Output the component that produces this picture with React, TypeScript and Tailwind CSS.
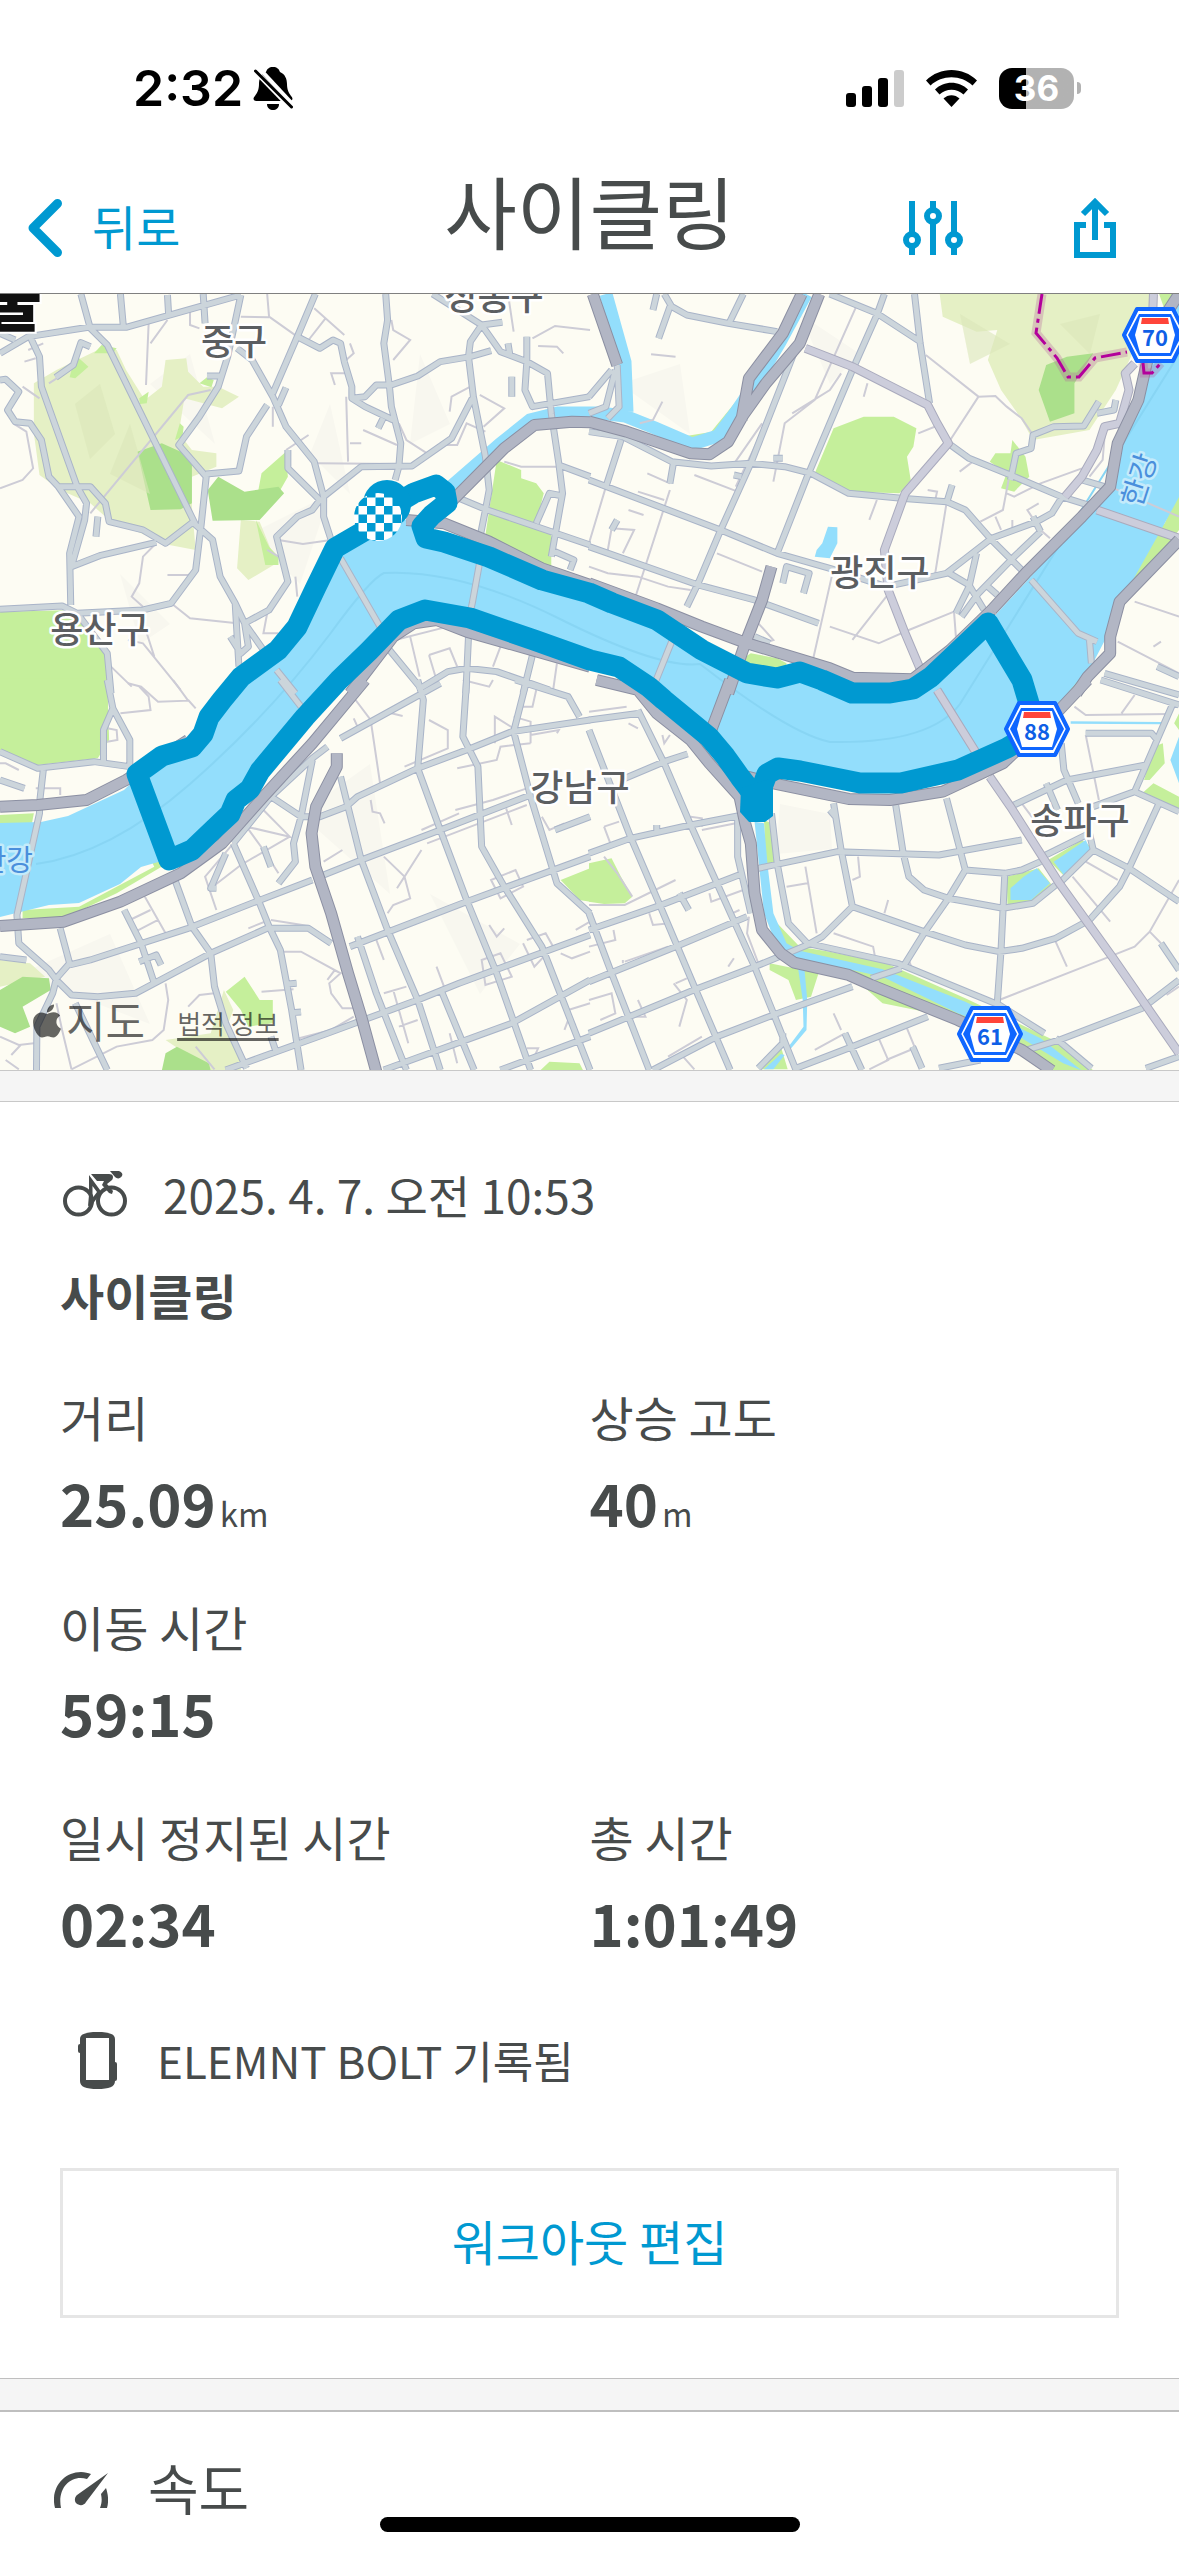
import type { ReactNode } from 'react';
import { FaApple } from 'react-icons/fa';

type Layers = {
  light: string;
  park: string;
  forest: string;
  water: string;
  minor: string;
  main: string;
  arterial: string;
  highway: string;
};

type Tile = Layers & { id: string; transform: string };

// Vector tiles, each drawn in its own 1568-unit wide grid
const TILES: Tile[] = [
  {
    id: 'nw',
    transform: 'translate(0 -4) scale(0.3763 0.3333)',
    light:
      'M90 280L150 240L260 180L310 180L335 240L385 330L430 290L440 210L495 205L500 245L540 290L580 290L635 320L590 355L490 325L475 430L510 480L575 490L575 530L510 560L510 650L520 780L450 765L290 690L240 640L160 600L105 555L90 430Z M640 690L690 695L735 820L660 870L630 835Z',
    park:
      'M685 610L695 550L760 485L765 560L740 610Z M190 240L210 205L235 230L200 265L185 262Z M680 690L715 770L740 800L740 825L705 825Z M250 190L270 165L310 175L300 190Z M370 325L395 305L390 340L372 342Z M530 280L550 262L568 270L562 292Z M465 450L478 400L488 410L485 440Z M0 965L210 960L215 1000L285 1100L285 1210L0 1210Z M1320 510L1385 540L1385 565L1425 580L1445 610L1425 700L1465 735L1465 830L1440 830L1290 735Z',
    forest: 'M365 485L430 460L510 500L510 640L480 658L400 660Z M552 600L580 560L650 605L740 590L755 610L690 690L565 692Z',
    water: '',
    minor:
      'M395 100L388 285M445 90L400 160M560 300L500 315L240 670M710 12L715 80L790 140M640 80L715 82M0 595L60 570L88 535L70 425L35 400M845 520L1060 522M920 320L925 515M965 420L1055 465M1060 400L1080 450L1135 490M415 760L380 800L370 880L350 920L380 950M740 750L805 762L880 750M455 940L505 985L630 1000M785 860L790 920M835 55L915 135M865 85L820 150M1040 90L1045 120L1090 150L1045 210M1415 145L1475 108L1568 120M1430 168L1480 170L1497 190M1340 515L1385 530L1480 530M1195 365L1200 320L1250 290M1275 315L1340 355L1285 410M1350 12L1365 125M1290 425L1240 400L1215 465L1180 465M710 970L700 1030L740 1030M1050 1050L1190 1010M1090 1040L1115 1160M1140 1095L1195 1075L1215 1130M1140 1095L1160 1170M130 280L185 240M60 290L105 325M725 350L725 410M820 435L760 480M930 460L960 460M890 285L880 250L920 250M505 60L505 105L530 115M65 215L95 205M75 180L115 160M340 1050L380 1060L480 1200M390 1030L410 1100M295 1130L350 1190M1480 1120L1470 1200M1330 1070L1310 1130M445 855L500 855L520 840M710 780L740 800M930 160L940 190L920 210',
    main:
      'M0 190L75 140L235 112L335 112L640 15M320 12L328 112M215 12L240 115L285 165L520 705L565 750L585 860L625 940L650 1000L700 1080M80 140L105 200L110 290L205 590M240 170L215 158L195 225L148 262M0 270L15 268L50 305L20 360L40 395L80 400L110 450L130 560L155 590L240 590L280 640L290 695L380 720L440 760L520 690M155 590L210 680L185 790L188 945M205 590L230 640L225 690L190 830L265 797L415 757M0 958L165 948L205 970L380 960L455 940L520 840L535 700L548 560L475 465L530 380L580 290L605 200L640 15M548 552L635 543L655 440L710 345M445 15L448 72M540 12L545 100M630 175L670 210L725 320L760 410L835 515L860 620L860 680L880 750M838 12L790 140L725 310M760 293L740 345M790 140L850 175L885 150L905 160L915 215L935 290L935 325L970 350L1045 390M935 325L970 320L1000 285L1040 285L1110 258L1170 215L1250 200L1305 182M1025 12L1030 90L1020 160L1035 290L1040 350L1065 460L1060 530L1050 570M860 620L960 530L1095 528L1200 445L1255 325M1150 12L1280 105L1250 155L1245 200L1258 320L1290 500L1300 600L1290 660L1275 745M1280 105L1330 185L1400 215L1455 250L1465 370L1485 520L1495 610L1465 800M1280 105L1335 97M1350 160L1355 195M1400 215L1395 300L1415 350L1568 320M1485 525L1568 560M1220 625L1290 658L1568 765M765 480L765 535L850 630L830 660L790 680L735 740L765 875L715 960L650 1000M1425 700L1460 610L1495 618M1465 780L1525 810L1515 840M625 940L635 1130M612 1040L640 1090L660 1070L650 1000M205 970L285 1090L295 1210M1035 1080L1115 1190M1110 1200L1190 1145L1240 1135L1320 1145L1460 1200M1245 1040L1238 1210M1415 1095L1390 1210M1018 385L1005 415M1400 140L1400 215M1360 260L1360 320M905 805L1010 1010M1275 815L1255 940L1245 990M735 1140L785 1210M0 130L40 150M260 680L255 740M550 258L590 258',
    arterial: '',
    highway:
      'M1195 640L1340 475L1420 405L1520 395L1568 397M1080 690L1180 700L1300 755L1440 835L1568 885M930 1210L1045 1040L1100 1000L1160 990L1240 1025L1568 1130',
  },
  {
    id: 'ne',
    transform: 'translate(589 -4) scale(0.3763 0.3333)',
    light:
      'M932 12L1500 12L1440 200L1400 300L1330 420L1180 450L1145 380L1095 300L1060 210L1085 120L1030 125L940 80Z',
    park:
      'M600 550L650 415L730 380L810 380L870 415L862 470L845 500L855 570L825 610L690 605Z M1065 515L1080 490L1120 490L1125 450L1160 500L1170 560L1130 605L1095 595L1110 550Z M1515 12L1568 12L1530 60Z M1568 600L1530 700L1490 740L1420 900L1440 905L1568 720Z M1340 1110L1270 1210L1310 1210Z M410 1105L430 1090L500 1105L525 1120L520 1145L440 1140Z',
    forest: 'M1195 300L1215 225L1270 200L1340 190L1290 280L1290 370L1225 395Z',
    water: 'M600 800L605 780L620 760L635 710L660 712L660 760L640 805Z',
    minor:
      'M165 193L230 200M710 50L600 330L520 400L490 575M670 250L640 300L540 370M895 195L1035 320L1080 318L1110 350L1150 385L1180 435M950 640L920 850M765 630L745 690M280 555L395 605M155 550L215 580M215 600L125 915M45 590L0 760M340 790L460 845M0 830L50 850L130 860L210 890L270 900M60 715L120 720L90 790M60 715L50 780M645 860L595 1110M790 920L700 1050M640 1010L770 1060L850 1020L970 965M970 965L975 1040M875 430L930 405M1310 535L1200 580L1130 620L1110 610M1115 570L1100 660L1040 695M1195 640L1165 660L1200 720L1225 745M1450 935L1568 980M1405 1055L1568 1150M1395 595L1568 680M470 400L390 590M460 400L380 530M195 335L170 390L135 400M1035 320L960 450M105 660L145 675M130 605L200 630M900 600L925 605L920 630M1370 440L1365 510L1330 560M1080 680L1095 720M740 280L730 320M450 1000L490 1050L440 1070M1500 1070L1520 1055M1020 515L985 545M1125 690L1125 720',
    main:
      'M640 12L765 70L880 155M865 12L880 160L905 340M785 12L765 75L700 240L580 560L500 790M600 30L430 520L350 720L290 880L260 950M0 425L90 440L220 515L325 528L430 520L520 530L590 550L690 610L830 625L950 635L1000 660L1070 750L1150 840M0 570L350 720L500 790L640 835L790 890L950 850L1070 745L1190 695L1230 670L1255 625M0 770L290 885L440 930L610 1000M85 450L45 590M225 515L215 580M200 12L220 50L260 75L370 100L500 125M410 12L370 105M170 60L180 12M215 50L185 145M955 460L1010 505L1120 555L1255 620L1340 650M1120 570L1135 490L1175 475L1180 435L1235 410L1315 408L1355 335M1350 370L1395 360L1400 330M965 585L950 640M950 845L1010 885L1050 960M1030 790L1010 890L975 970M1200 725L1130 800L1035 910L990 980M1180 680L1200 725M1060 890L1085 915M515 880L525 830L585 850L570 910M1510 1130L1568 1160M1370 1150L1568 1215M1175 870L1300 1030L1350 1055M1330 1050L1335 1120M225 1040L175 1180M75 225L80 350L50 385M70 240L45 350L0 370M60 240L0 320M385 555L405 560M440 1040L480 1060M1310 570L1370 590M490 505L515 505M60 720L75 690',
    arterial:
      'M575 175L700 230L900 345L925 400L955 460L840 610L785 780L795 900L840 1030L885 1150M1500 12L1498 70M1450 220L1425 250L1435 300L1410 400L1370 410L1350 480L1310 560L1265 620M1350 660L1568 745',
    highway:
      'M10 12L75 225M565 12L515 130L425 265L405 390M612 12L560 160L470 280L410 375L370 455L320 493L270 490L100 425L0 395M1568 12L1500 130L1460 330L1405 460L1385 590L1310 680L1160 850L1070 960M1568 750L1410 935L1385 1040L1385 1090L1325 1160L1295 1210M0 880L180 955L300 1010L420 1060L640 1135L700 1163L860 1168L960 1080L1070 960M485 830L460 930L415 1060L370 1210',
  },
  {
    id: 'sw',
    transform: 'translate(0 386) scale(0.3763 0.3333)',
    light: 'M0 840L80 850L120 890L0 920Z M440 1080L560 1060L595 930L620 990L600 1050L640 1150L640 1172L560 1172Z',
    park:
      'M0 -5L285 -5L290 180L260 235L100 255L0 210Z M60 690L210 680L410 560L380 490L440 490L460 540L310 640L170 715L60 715Z M0 405L90 400L85 430L0 430Z M600 935L650 890L690 960L725 960L725 1030L660 1040L640 990Z M1490 600L1568 565L1568 665L1540 660Z M1435 1172L1460 1145L1540 1150L1550 1172Z',
    forest: 'M0 930L60 890L130 895L135 930L60 980L80 1040L40 1060L0 1040Z M430 1172L440 1120L470 1100L555 1150L560 1172Z',
    water: '',
    minor:
      'M340 10L375 20L420 65L500 62L460 0M320 100L400 90L395 50L370 20M500 60L520 85M0 250L15 250L50 270M285 145L310 150L312 180L285 185M95 325L160 325L160 345M700 390L770 470L655 440M655 440L700 510L740 580M770 470L640 555L560 625M620 490L545 590L575 690M385 650L440 760M345 720L400 690M360 755L420 720M750 815L800 815L905 880L875 910L880 940L910 985L940 985M440 910L447 960L435 1050L405 1080L310 1100L190 1168M150 970L165 1050L190 1168M695 935L780 928M795 1075L880 1050L940 1010M945 60L985 120L1010 310M1140 120L1190 150L1190 205L1075 260M1120 510L1075 590L1090 655L1045 675L1030 700M1020 530L1075 590L1055 625M1210 390L1310 360L1400 325M1120 450L1220 400M1135 490L1400 375M1365 145L1315 110L1315 190M1365 110L1410 125L1410 190M1305 600L1370 570L1390 620L1330 655ZM1280 840L1330 820L1360 890L1290 915ZM1400 780L1450 760L1470 800L1420 860L1390 790M1300 735L1320 770L1340 745M1020 940L1080 920M1060 1040L1110 1020M1045 930L1085 1090M0 1070L50 1095L90 1090M15 1140L50 1168M55 1095L30 1125M520 1100L570 1168M500 980L530 945L570 940M720 720L820 738M985 360L990 395L1010 400L1022 430M1215 265L1320 240L1330 200L1410 190M1440 410L1460 450L1500 430M1160 860L1180 920M1000 780L1020 840M1040 100L1070 108M940 115L950 140M860 545L910 510M1480 160L1485 150L1410 165M1500 1050L1510 1020L1530 1035M1490 820L1520 835L1568 815M1530 750L1568 725M1345 385L1360 435M1230 0L1300 20L1310 0M660 745L715 720M870 900L890 870M1390 80L1415 80L1425 30M1510 990L1568 970M1195 1060L1215 1150M1400 1105L1430 1105L1420 1130',
    main:
      'M115 270L105 370L105 400L45 705L50 790L130 870L150 900L190 945L260 950L360 940L560 820L710 745L820 745L880 790M0 215L100 265L250 245L345 260M285 0L300 85L345 180L345 260M300 85L275 150L275 245M0 300L65 325M0 830L70 840M160 745L185 850L150 895M185 855L240 840L500 745L680 665L830 600M150 895L140 940L98 1040L97 1170M200 970L285 1170M330 690L375 790L410 910M370 845L415 825L428 855M465 600L510 740L560 820L570 920L600 1030L655 1165M620 490L690 670L715 740L745 810L775 990L800 1170M600 1170L870 1060L1110 960L1220 910L1568 765M860 585L960 540L1170 450L1410 345M620 490L720 350L830 235L870 200M720 350L800 410L780 490L785 545L740 610M830 240L800 410L850 410L920 380L950 350L1110 265L1240 210L1360 155L1568 120M905 290L960 540L1030 750L1110 960L1170 1170M930 800L1240 665L1568 530M1110 0L1125 60L1110 265L1170 450L1240 660L1320 880L1410 1170M1240 0L1230 170L1270 260L1280 500L1340 620L1440 800L1568 1170M1400 0L1365 155L1410 350L1480 610L1568 700M1370 0L1510 50L1540 110M905 175L1170 10M950 770L1000 940L1080 1170M1020 1170L1360 1030L1568 900M1330 1170L1568 1070M1170 925L1260 1170M1475 450L1568 410M745 0L800 80M720 1070L735 1120M765 912L788 910M775 998L800 996M600 520L560 625L575 625M700 500L720 560',
    arterial: '',
    highway:
      'M0 380L100 375L230 360L335 300L500 180M0 738L170 725L320 665L480 580L590 490L700 350L830 190L970 0M895 220L895 260L840 380L828 460L838 560L880 700L925 880L960 1010L1000 1175',
  },
  {
    id: 'se',
    transform: 'translate(589 386) scale(0.3763 0.3333)',
    light: '',
    park:
      'M0 550L60 535L85 590L115 650L95 670L40 672L0 665Z M465 420L485 430L492 550L470 550Z M480 850L610 880L590 950L550 960L530 900L480 870Z M500 730L560 800L640 815L790 850L1000 955L1290 1110L1340 1172L1230 1172L1000 1020L780 970L700 890L520 830Z M1110 590L1195 565L1230 615L1170 670L1112 675Z M1220 540L1310 480L1335 500L1260 585Z M1500 200L1525 190L1530 250L1490 300L1475 300Z M1470 340L1500 310L1568 350L1568 390Z M460 1168L510 1100L528 1168Z M1568 100L1555 130L1568 150Z M1240 70L1300 0L1290 -10L1230 50Z',
    forest: '',
    water:
      'M1235 545L1320 480L1335 515L1265 590Z M1120 625L1155 590L1190 565L1225 610L1175 660L1120 660Z M1568 170L1545 240L1568 310Z M1280 124L1520 126L1520 133L1280 131Z M440 425L465 430L475 560L490 700L525 790L560 812L780 868L1000 965L1200 1075L1310 1172L1260 1150L1150 1075L980 1000L780 890L540 830L500 800L465 700Z M555 860L572 860L580 960L578 1050L535 1108L530 1100L570 1040L568 960Z M465 1168L510 1122L520 1125L490 1168Z',
    minor:
      'M0 95L100 80M300 450L390 430M575 560L605 760M525 620L580 610M715 530L720 590L700 600M650 760L755 800L760 830M795 660L785 700M1090 960L1350 845L1450 800L1490 755L1568 600M1240 785L1270 860M1320 165L1355 360M1290 80L1320 105L1540 102M1450 45L1415 100M1285 590L1385 725M1320 545L1405 600M0 675L95 675L230 600M40 530L75 580L115 650M160 700L170 735L215 730M95 845L210 800M225 910L260 960L240 1040M230 910L260 895M770 1075L795 1140L745 1168M790 1140L865 1105M845 1045L865 1100M600 1110L680 1060M650 1000L670 1050M425 710L420 760L450 850M40 440L60 500L100 480M40 440L80 425M0 960L60 940L70 1000L30 1020M210 1130L300 1070M320 640L325 665L410 630M1490 755L1520 790M1150 370L1190 430M105 130L130 145M195 165L200 190L215 165M370 860L385 835M90 840L90 850M0 800L70 780L65 750M270 410L300 415L300 440M850 840L858 865M1535 945L1568 920M250 1130L280 1168M380 700L400 690M130 960L150 1010L120 1010',
    main:
      'M0 520L110 475L270 435L395 408M0 750L180 680L410 580M0 905L230 800L420 710M0 1060L290 925L430 865L580 795M170 1170L340 1070L490 1005L700 920M0 120L135 100M130 90L200 250L270 435L340 610L440 860L490 1000L550 1170M85 300L200 245L262 222M0 150L110 470L190 680L280 920L375 1170M0 700L60 880L160 1170M395 410L395 530L430 700M485 400L500 550L530 730L580 790L820 850L1090 975L1210 1060M450 565L660 515L930 525L1150 480M650 370L670 510L700 680L620 770L580 795M815 375L835 520L850 590L890 630L955 655L1100 685L1180 670L1240 615M950 355L1000 570L955 655L890 760L835 860M700 680L890 755L1000 795L1090 815L1150 805L1240 775L1330 720M1000 570L1105 580L1150 570L1200 545M1105 580L1095 810L1085 970M1205 530L1330 460L1340 510L1250 610M1340 510L1435 565L1568 665M1120 380L1270 300L1480 255M1255 190L1262 270L1300 370M1215 310L1245 390M1320 160L1495 160L1510 180M1360 0L1568 75M1550 75L1450 335L1568 395M1515 370L1435 565L1410 620L1330 720M1450 335L1340 380M550 1165L700 1100L900 1010M1165 1110L1250 1080L1470 985L1568 900M1240 1075L1335 1165M680 1060L725 1170M930 1165L1040 1140M750 895L830 865M860 1100L885 1165M1480 1165L1568 1130M450 1165L515 1090L515 1060M1520 790L1568 870M240 640L265 690M640 390L655 410M180 435L180 460',
    arterial: 'M925 30L1030 220M1065 290L1120 380L1250 610L1390 830L1470 960L1568 1120',
    highway:
      'M20 0L130 30L180 100L270 180L320 250L400 350L415 430L430 490L440 640L460 750L510 820L545 848L690 885L750 915L980 1020L1150 1110L1230 1172M375 0L325 150M420 290L490 310L690 357L800 360L940 335L1100 250L1250 90L1325 0',
  },
];

const RIVER =
  'M0 529L41 528L68 522L124 496L162 459L192 453L209 423L241 383L278 356L297 333L316 293L335 254L378 229L414 225L444 248L489 263L542 286L589 299L657 326L702 356L747 379L777 386L800 376L852 399L890 399L931 383L988 329L1025 289L1078 229L1108 199L1116 156L1135 106L1153 39L1179 6V203L1161 236L1120 309L1105 346L1093 369L1056 413L1003 446L958 476L901 489L860 489L773 476L756 500L740 483L709 443L664 406L619 373L590 366L534 346L470 324L425 316L399 326L369 363L339 386L260 479L230 523L192 556L165 566L141 573L120 590L79 609L49 611L0 623Z';

// Tributary running down from the north-east
const STREAM =
  'M446 197L500 150L530 126L558 119L600 119L625 122L655 134L692 150L718 142L736 118L755 90L780 48L806 0M606 0L625 68L627 118';

const ROUTE =
  'M378 229L335 254L316 293L297 333L278 356L241 383L222 406L209 423L203 440L192 453L162 462L137 480L169 566L192 556L214 535L230 520L236 506L250 495L260 477L305 423L339 386L369 357L399 326L425 316L470 324L534 346L590 366L619 373L649 393L664 406L709 443L725 462L740 483L750 496L756 516L761 496L767 480L778 474L800 477L860 489L901 489L958 476L1007 454L1037 436L1022 386L988 329L931 383L913 395L890 399L852 399L822 386L800 378L777 384L747 379L702 356L657 326L612 309L589 299L542 286L489 263L444 248L426 244L422 232L432 221L447 209L445 198L436 191L414 199L387 215';

const ROAD_STYLES = [
  { layer: 'main', casing: '#a9b4c8', fill: '#ccd5db', outer: 7, inner: 5 },
  { layer: 'arterial', casing: '#a9aabd', fill: '#cccddb', outer: 9, inner: 7 },
  { layer: 'highway', casing: '#8b8fa2', fill: '#b2b6c4', outer: 12, inner: 10 },
] as const;

const DISTRICTS = [
  { name: '중구', x: 234, y: 61 },
  { name: '성동구', x: 494, y: 16 },
  { name: '용산구', x: 100, y: 349 },
  { name: '광진구', x: 880, y: 292 },
  { name: '강남구', x: 580, y: 507 },
  { name: '송파구', x: 1080, y: 540 },
];

const SHIELDS = [
  { no: '70', x: 1155, y: 41 },
  { no: '88', x: 1037, y: 435 },
  { no: '61', x: 990, y: 740 },
];

const STATS = [
  { label: '거리', value: '25.09', unit: 'km', span: false },
  { label: '상승 고도', value: '40', unit: 'm', span: false },
  { label: '이동 시간', value: '59:15', unit: '', span: true },
  { label: '일시 정지된 시간', value: '02:34', unit: '', span: false },
  { label: '총 시간', value: '1:01:49', unit: '', span: false },
];

function TileGroup({ layer, children }: { layer: keyof Layers; children: (d: string) => ReactNode }) {
  return (
    <>
      {TILES.filter((t) => t[layer]).map((t) => (
        <g key={t.id} transform={t.transform}>
          {children(t[layer])}
        </g>
      ))}
    </>
  );
}

function Shield({ no, x, y }: { no: string; x: number; y: number }) {
  return (
    <g transform={`translate(${x} ${y})`}>
      <path d="M-18 -26H18L31 0L18 26H-18L-31 0Z" fill="#fff" stroke="#0f66ff" strokeWidth="4" strokeLinejoin="round" />
      <path d="M-16 -21H16L27 0L16 21H-16L-27 0Z" fill="#0f66ff" />
      <path d="M-15 -18H15L20 0L15 18H-15L-20 0Z" fill="#fff" />
      <path d="M-13 -17H13L14 -11H-14Z" fill="#ff453a" />
      <text y="11" textAnchor="middle" className="fill-[#0f5fe6] font-['Noto_Sans_CJK_KR',sans-serif] text-[22px] font-bold">
        {no}
      </text>
    </g>
  );
}

function RouteMap() {
  return (
    <svg viewBox="0 0 1179 776" className="block w-full bg-[#fdfcf3]" role="img" aria-label="경로 지도">
      <defs>
        <pattern id="checker" x="367" y="212" width="17" height="17" patternUnits="userSpaceOnUse">
          <rect width="17" height="17" fill="#fff" />
          <rect width="8.5" height="8.5" fill="#0099d1" />
          <rect x="8.5" y="8.5" width="8.5" height="8.5" fill="#0099d1" />
        </pattern>
      </defs>

      {/* Hill shading */}
      <path
        d="M150 90L190 60L215 150ZM250 240L330 200L300 290ZM120 280L170 330L140 350ZM330 110L350 200L310 160ZM420 60L450 130L410 150ZM620 90L680 70L690 140ZM800 20L860 60L830 90ZM300 520L370 470L390 600ZM20 680L110 640L150 730ZM430 600L520 650L480 700ZM780 510L830 520L832 555L776 560Z"
        fill="#f8f7ef"
      />

      <TileGroup layer="light">{(d) => <path d={d} fill="#e5f0c5" />}</TileGroup>
      <TileGroup layer="park">{(d) => <path d={d} fill="#c5ef9b" />}</TileGroup>
      <TileGroup layer="forest">{(d) => <path d={d} fill="#abe08b" />}</TileGroup>
      <path d="M75 110L100 90L115 140L90 165ZM130 130L150 200L110 180ZM960 20L1010 50L970 70ZM1060 30L1100 20L1090 60Z" fill="#dbe6b9" opacity="0.6" />
      <path d="M649 132L686 142L711 138L742 100L742 112L716 138L692 148Z" fill="#c5ef9b" />

      <path d={RIVER} fill="#93defc" />
      <path d={STREAM} fill="none" stroke="#93defc" strokeWidth="13" />
      <TileGroup layer="water">{(d) => <path d={d} fill="#93defc" />}</TileGroup>
      <path
        d="M36 570Q110 560 190 490T330 340Q370 285 384 279Q460 275 560 325T700 370Q790 440 830 448Q930 450 960 410L1179 60"
        fill="none"
        stroke="#88d5f4"
        strokeWidth="2"
      />

      <TileGroup layer="minor">
        {(d) => <path d={d} fill="none" stroke="#cdccd6" strokeWidth="2" vectorEffect="non-scaling-stroke" />}
      </TileGroup>
      {ROAD_STYLES.map((r) => (
        <g key={r.layer} fill="none" strokeLinejoin="round">
          <TileGroup layer={r.layer}>
            {(d) => <path d={d} stroke={r.casing} strokeWidth={r.outer} vectorEffect="non-scaling-stroke" />}
          </TileGroup>
          <TileGroup layer={r.layer}>
            {(d) => <path d={d} stroke={r.fill} strokeWidth={r.inner} vectorEffect="non-scaling-stroke" />}
          </TileGroup>
        </g>
      ))}

      {/* City limits */}
      <g fill="none">
        <path d="M1042 0L1036 39L1057 64L1068 83L1079 83L1095 64L1127 58M1143 69L1144 79L1152 79L1161 69" stroke="#b4609c" strokeOpacity="0.3" strokeWidth="9" />
        <path
          d="M1042 0L1036 39L1057 64L1068 83L1079 83L1095 64L1127 58M1143 69L1144 79L1152 79L1161 69"
          stroke="#b3009b"
          strokeWidth="3"
          strokeDasharray="20 5 4 5"
        />
      </g>

      <path d={ROUTE} fill="none" stroke="#0099d1" strokeWidth="21" strokeLinejoin="round" strokeLinecap="round" />
      <path d="M741 494L773 484V522L765 528H749L740 518Z" fill="#0099d1" />
      <circle cx="387" cy="210" r="24" fill="#0099d1" />
      <circle cx="378" cy="223" r="24" fill="url(#checker)" />

      <g className="font-['Noto_Sans_CJK_KR',sans-serif]">
        {DISTRICTS.map((d) => (
          <text
            key={d.name}
            x={d.x}
            y={d.y}
            textAnchor="middle"
            stroke="#fff"
            strokeWidth="5"
            strokeLinejoin="round"
            paintOrder="stroke"
            className="fill-[#5b5e61] text-[36px] font-medium"
          >
            {d.name}
          </text>
        ))}
        <text x="42" y="31" textAnchor="end" stroke="#fff" strokeWidth="4" paintOrder="stroke" className="fill-[#111] text-[64px] font-black">
          서울
        </text>
        <g className="fill-[#4a8fdc] text-[29px]" stroke="#c4ebfb" strokeWidth="5" strokeLinejoin="round" paintOrder="stroke">
          <text x="33" y="577" textAnchor="end">
            한강
          </text>
          <text textAnchor="middle" transform="translate(1149 189) rotate(-72)">
            한강
          </text>
        </g>
      </g>

      {SHIELDS.map((s) => (
        <Shield key={s.no} {...s} />
      ))}
    </svg>
  );
}

function StatusBar() {
  return (
    <div className="flex h-[162px] items-center justify-between pt-[14px] pr-[98px] pl-[133px] font-['Inter',sans-serif] text-black">
      <div className="flex items-center gap-[10px]">
        <span className="text-[50px] leading-[60px] font-semibold">2:32</span>
        <svg viewBox="0 0 40 43" className="h-[43px] w-[40px]">
          <path d="M20 0c-4 0-6 2-7 5C8 7 6 12 6 17c0 6-2 9-4 12-3 3-1 5 2 5h32c3 0 5-2 2-5-2-3-4-6-4-12 0-5-2-10-7-12-1-3-3-5-7-5Z" />
          <path d="M14 37h12c0 4-3 6-6 6s-6-2-6-6Z" />
          <path d="M5 0L43 41" stroke="#fff" strokeWidth="4" />
          <path d="M2 4L38 41" stroke="#fff" strokeWidth="5" />
          <path d="M2.500 4L38.500 40" stroke="#000" strokeWidth="3" strokeLinecap="round" />
        </svg>
      </div>
      <div className="flex items-center gap-[22px]">
        <svg viewBox="0 0 58 37" className="h-[37px] w-[58px]">
          <rect y="23" width="10" height="14" rx="3" />
          <rect x="16" y="16" width="10" height="21" rx="3" />
          <rect x="32" y="8" width="10" height="29" rx="3" />
          <rect x="48" width="10" height="37" rx="3" fill="#ccc" />
        </svg>
        <svg viewBox="0 0 51 37" className="h-[37px] w-[51px]">
          <path d="M0 10.500C14-3.500 37-3.500 51 10.500L46.500 15.500C35 4.500 16 4.500 4.500 15.500Z" />
          <path d="M9 19.500C18 10.500 33 10.500 42 19.500L37.500 24.500C31 18 20 18 13.500 24.500Z" />
          <path d="M17.500 28.500C22 24 29 24 33.500 28.500L25.500 37Z" />
        </svg>
        <div className="flex items-center gap-[3px]">
          <div className="flex h-[41px] w-[75px] items-center justify-center rounded-[13px] bg-linear-to-r from-black from-36% to-[#b2b2b2] to-36% text-[35px] leading-none font-bold text-white">
            36
          </div>
          <div className="h-3 w-1 rounded-r-full bg-[#b2b2b2]" />
        </div>
      </div>
    </div>
  );
}

function NavBar() {
  return (
    <nav className="grid h-[132px] grid-cols-[1fr_auto_1fr] items-center border-b border-[#808080] px-7">
      <button className="flex items-center gap-[30px] justify-self-start text-[48px] leading-[60px] text-[#0099d1]">
        <svg viewBox="0 0 34 58" className="h-[58px] w-[34px]" fill="none" stroke="currentColor" strokeWidth="9" strokeLinecap="round" strokeLinejoin="round">
          <path d="M29.500 4.500L5 29L29.500 53.500" />
        </svg>
        <span className="pb-1.5">뒤로</span>
      </button>
      <h1 className="pb-9 text-[79px] leading-[96px]">사이클링</h1>
      <div className="flex items-center gap-[111px] justify-self-end pr-[35px] text-[#0099d1]">
        <button aria-label="설정">
          <svg viewBox="0 0 60 54" className="h-[54px] w-[60px]" fill="none" stroke="currentColor" strokeWidth="6">
            <path d="M9 0V32M9 46V54M30 0V8M30 22V54M51 0V32M51 46V54" />
            <circle cx="9" cy="39" r="6" />
            <circle cx="30" cy="15" r="6" />
            <circle cx="51" cy="39" r="6" />
          </svg>
        </button>
        <button aria-label="공유">
          <svg viewBox="0 0 42 60" className="h-[60px] w-[42px]" fill="none" stroke="currentColor" strokeWidth="6">
            <path d="M12 27H3V57H39V27H30M21 42V5M9 16L21 4L33 16" />
          </svg>
        </button>
      </div>
    </nav>
  );
}

function BikeIcon() {
  return (
    <svg viewBox="0 0 64 46" className="h-[46px] w-[64px]" fill="currentColor">
      <g fill="none" stroke="currentColor" strokeWidth="4">
        <circle cx="15.500" cy="30" r="13.500" />
        <circle cx="48.500" cy="30" r="13.500" />
      </g>
      <path d="M47 0H56C59 1 60 3 59 5C57 8 54 8 52 6Z" />
      <path d="M28 3H46C50 3 51 6 49 9L44 13L50 20L49 23L46 22L39 14L41 10L34 10Z" />
      <path fillRule="evenodd" d="M26 4L37 19C38 20 38 22 37 23L29 34L25 35L26 24ZM29.500 15V27L34 21Z" />
    </svg>
  );
}

function DeviceIcon() {
  return (
    <svg viewBox="0 0 39 57" className="h-[57px] w-[39px]" fill="currentColor">
      <path fillRule="evenodd" d="M2 7C2 2 8 0 19.500 0S37 2 37 7V49C37 55 31 57 19.500 57S2 55 2 49ZM8 6V48H31V6Z" />
      <rect y="12" width="4" height="9" rx="2" />
      <rect x="35" y="30" width="4" height="19" rx="2" />
    </svg>
  );
}

function GaugeIcon() {
  return (
    <svg viewBox="0 0 54 36" className="mt-2 h-[36px] w-[54px]" fill="currentColor">
      <path d="M1 36C-4 17 9 0 27 0C31 0 34 1 37 2L33 7C17 2 3 16 7 36Z" />
      <path d="M54 1L32 30C30 34 25 34 22 31C20 28 21 25 23 23Z" />
      <path d="M52 16C54 22 55 29 53 36H46C48 31 48 27 47 22Z" />
    </svg>
  );
}

export default function App() {
  return (
    <div className="relative min-h-screen bg-white font-['Noto_Sans_CJK_KR',sans-serif] text-[#474b4b]">
      <header>
        <StatusBar />
        <NavBar />
      </header>

      <main>
        <div className="relative">
          <RouteMap />
          <div className="absolute bottom-[21px] left-8 flex items-center gap-8 text-black/60">
            <div className="flex items-center gap-1 text-[43px] leading-[60px]">
              <FaApple className="mt-1 h-[38px] w-[30px]" />
              지도
            </div>
            <a href="#legal" className="mt-2 text-[26px] leading-[36px] underline decoration-3 underline-offset-4">
              법적 정보
            </a>
          </div>
        </div>

        <div className="h-8 border-y border-[#c8c8c8] bg-[#f5f5f5]" />

        <section className="px-[60px] py-[60px]">
          <div className="flex items-center gap-9 pt-[2px] pl-[3px] text-[46px] leading-[60px]">
            <BikeIcon />
            2025. 4. 7. 오전 10:53
          </div>
          <h2 className="mt-10 text-[48px] leading-[60px] font-bold">사이클링</h2>

          <dl className="mt-[62px] grid grid-cols-2 gap-y-[60px]">
            {STATS.map((s) => (
              <div key={s.label} className={s.span ? 'col-span-2' : ''}>
                <dt className="text-[48px] leading-[60px]">{s.label}</dt>
                <dd className="mt-5 h-[70px] text-[58px] leading-[72px] font-bold">
                  {s.value}
                  {s.unit && <span className="ml-1 text-[33px] leading-none font-normal">{s.unit}</span>}
                </dd>
              </div>
            ))}
          </dl>

          <div className="mt-[74px] flex items-center gap-10 pl-[18px] text-[44px] leading-[60px]">
            <DeviceIcon />
            ELEMNT BOLT 기록됨
          </div>

          <button className="mt-[78px] h-[150px] w-full border-3 border-[#e6e6e6] pb-1.5 text-[48px] leading-[60px] text-[#0099d1]">
            워크아웃 편집
          </button>
        </section>

        <div className="h-[34px] border-t border-b-2 border-[#bfbfbf] bg-[#f5f5f5]" />

        <section className="flex items-center gap-10 px-[54px] pt-[38px] pb-8">
          <GaugeIcon />
          <h2 className="text-[55px] leading-[72px]">속도</h2>
        </section>
      </main>

      <div className="absolute bottom-6 left-1/2 h-[15px] w-[420px] -translate-x-1/2 rounded-full bg-black" />
    </div>
  );
}
